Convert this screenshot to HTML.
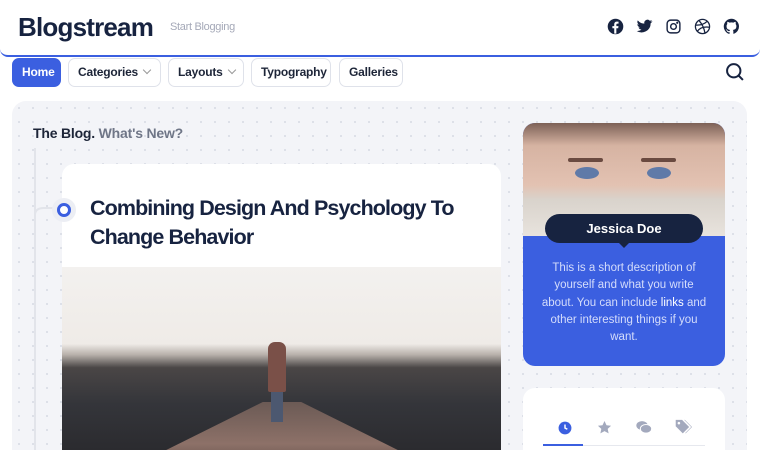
<!DOCTYPE html>
<html><head><meta charset="utf-8"><style>
*{box-sizing:border-box;margin:0;padding:0}
html,body{width:760px;height:450px;overflow:hidden}
body{background:#fff;font-family:"Liberation Sans",sans-serif;position:relative}
.hdr{position:absolute;left:0;top:0;width:760px;height:57px;border-bottom:2px solid #3b5fe0;border-radius:0 0 8px 8px;background:#fff}
.logo{position:absolute;left:18px;top:12px;font-size:26px;font-weight:bold;color:#172340;letter-spacing:-0.8px}
.tag{position:absolute;left:170px;top:21px;font-size:11px;color:#a5a9b8;letter-spacing:-0.3px}
.soc{position:absolute;top:18px}
.nav a{position:absolute;top:58px;height:29px;border:1px solid #dfe2ea;border-radius:7px;background:#fff;font-size:12px;font-weight:bold;color:#1d2538;line-height:27px;padding:0 9px;text-decoration:none;white-space:nowrap;letter-spacing:-0.2px}
.nav a.on{background:#3b5fe0;color:#fff;border-color:#3b5fe0}
.car{display:inline-block;width:6px;height:6px;border-right:1.3px solid #999;border-bottom:1.3px solid #999;transform:rotate(45deg);margin-left:6px;position:relative;top:-3px}
.main{position:absolute;left:12px;top:101px;width:735px;height:349px;border-radius:14px 14px 0 0;background-color:#f3f4f8;background-image:radial-gradient(circle,#d6d9e2 0.8px,transparent 1px);background-size:14px 14px}
.bt{position:absolute;left:33px;top:125px;font-size:14px;font-weight:bold;color:#1d2538;letter-spacing:-0.2px}
.bt span{color:#6f7687}
.vline{position:absolute;left:34px;top:148px;width:2px;height:302px;background:#e2e4ea}
.post{position:absolute;left:62px;top:164px;width:439px;height:286px;background:#fff;border-radius:12px 12px 0 0;overflow:hidden}
.title{position:absolute;left:28px;top:30px;font-size:21.5px;font-weight:bold;color:#172340;line-height:29px;letter-spacing:-0.9px}
.img1{position:absolute;left:0;top:103px;width:439px;height:183px;overflow:hidden;background:linear-gradient(#f3f1ef 0%,#efebe7 42%,#b7b0aa 48%,#4a4646 55%,#34353a 75%,#2b2b2f 100%)}
.dot{position:absolute;left:52px;top:198px;width:24px;height:24px;border-radius:50%;background:#eceef4}
.dot i{position:absolute;left:5px;top:5px;width:14px;height:14px;border-radius:50%;border:3px solid #3b5fe0;background:#fff}
.prof{position:absolute;left:523px;top:123px;width:202px;height:243px;border-radius:12px;overflow:hidden;background:#3b5fe0}
.face{position:absolute;left:0;top:0;width:202px;height:113px;background:linear-gradient(#7d6157 0%,#d6b3a2 20%,#e3c2b2 55%,#d9d3cc 68%,#e8e3dd 100%)}
.name{position:absolute;left:22px;top:91px;width:158px;height:29px;border-radius:15px;background:#172340;color:#fff;font-weight:bold;font-size:13px;text-align:center;line-height:29px}
.name:after{content:"";position:absolute;left:73px;top:28px;border:6px solid transparent;border-top-color:#172340}
.desc{position:absolute;left:0;top:137px;width:202px;text-align:center;font-size:11.5px;line-height:17.3px;color:#d5ddfb;white-space:nowrap}
.desc b{color:#fff;font-weight:normal}
.tabs{position:absolute;left:523px;top:388px;width:202px;height:62px;border-radius:12px 12px 0 0;background:#fff;overflow:hidden}
</style></head><body>
<div class="hdr">
<div class="logo">Blogstream</div><div class="tag">Start Blogging</div>
<svg class="soc" style="left:607px" width="17" height="17" viewBox="0 0 24 24"><circle cx="12" cy="12" r="11" fill="#172340"/><path d="M13.2 22v-7.5h2.6l.4-3h-3v-2c0-.9.3-1.5 1.6-1.5h1.5V5.3c-.3 0-1.2-.1-2.3-.1-2.3 0-3.8 1.4-3.8 3.9v2.3H7.6v3h2.6V22z" fill="#fff"/></svg>
<svg class="soc" style="left:636px" width="17" height="17" viewBox="0 0 24 24"><path fill="#172340" d="M23 4.6c-.8.4-1.7.6-2.6.7.9-.6 1.6-1.4 2-2.5-.9.5-1.9.9-2.9 1.1A4.5 4.5 0 0 0 11.8 8 12.8 12.8 0 0 1 2.5 3.3a4.5 4.5 0 0 0 1.4 6c-.7 0-1.4-.2-2-.6 0 2.2 1.6 4 3.6 4.5-.7.2-1.4.2-2 .1.6 1.8 2.3 3.1 4.2 3.1A9 9 0 0 1 1 18.3 12.8 12.8 0 0 0 20.7 7.4c.9-.6 1.6-1.4 2.3-2.3z"/></svg>
<svg class="soc" style="left:665px" width="17" height="17" viewBox="0 0 24 24" fill="none" stroke="#172340" stroke-width="2"><rect x="3" y="3" width="18" height="18" rx="5"/><circle cx="12" cy="12" r="4"/><circle cx="17.3" cy="6.7" r=".6" fill="#172340"/></svg>
<svg class="soc" style="left:694px" width="17" height="17" viewBox="0 0 24 24" fill="none" stroke="#172340" stroke-width="1.8"><circle cx="12" cy="12" r="10"/><path d="M7 3.5c4 4.5 7 10 8.5 17.5M2.2 10c6 .5 12-1 16.5-5.5M4.5 19C8 14 14 12 21.8 13"/></svg>
<svg class="soc" style="left:723px" width="17" height="17" viewBox="0 0 24 24"><path fill="#172340" d="M12 1a11 11 0 0 0-3.5 21.4c.6.1.8-.2.8-.5v-2c-3.1.7-3.7-1.3-3.7-1.3-.5-1.3-1.2-1.6-1.2-1.6-1-.7.1-.7.1-.7 1.1.1 1.7 1.1 1.7 1.1 1 1.7 2.6 1.2 3.2.9.1-.7.4-1.2.7-1.5-2.5-.3-5.1-1.2-5.1-5.4 0-1.2.4-2.2 1.1-3-.1-.3-.5-1.4.1-2.9 0 0 .9-.3 3 1.1a10.5 10.5 0 0 1 5.5 0c2.1-1.4 3-1.1 3-1.1.6 1.5.2 2.6.1 2.9.7.8 1.1 1.8 1.1 3 0 4.2-2.6 5.1-5.1 5.4.4.3.8 1 .8 2v3c0 .3.2.6.8.5A11 11 0 0 0 12 1z"/></svg>
</div>
<div class="nav">
<a class="on" style="left:12px;width:49px">Home</a>
<a style="left:68px;width:93px">Categories<span class="car"></span></a>
<a style="left:168px;width:76px">Layouts<span class="car"></span></a>
<a style="left:251px;width:80px">Typography</a>
<a style="left:339px;width:64px">Galleries</a>
</div>
<svg style="position:absolute;left:725px;top:62px" width="20" height="20" viewBox="0 0 24 24" fill="none" stroke="#172340" stroke-width="2.4"><circle cx="10.5" cy="10.5" r="8"/><path d="M16.5 16.5l5 5"/></svg>
<div class="main"></div>
<div class="bt">The Blog. <span>What's New?</span></div>
<div class="vline"></div>
<svg style="position:absolute;left:34px;top:205px" width="22" height="14"><path d="M1 14V10Q1 3 10 3h12" fill="none" stroke="#e2e4ea" stroke-width="2"/></svg>
<div class="post">
<div class="title">Combining Design And Psychology To<br>Change Behavior</div>
<div class="img1">
<div style="position:absolute;left:60px;top:135px;width:320px;height:70px;background:linear-gradient(#6b5a55,#8d7168 60%,#5a4a45);clip-path:polygon(44% 0,56% 0,100% 100%,0 100%)"></div>
<div style="position:absolute;left:206px;top:75px;width:18px;height:50px;background:#7a5048;border-radius:7px 7px 2px 2px"></div>
<div style="position:absolute;left:209px;top:125px;width:12px;height:30px;background:#4c5870"></div>
</div>
</div>
<div class="dot"><i></i></div>
<div class="prof">
<div class="face">
<div style="position:absolute;left:52px;top:44px;width:24px;height:12px;border-radius:50%;background:#5f7aa8"></div>
<div style="position:absolute;left:124px;top:44px;width:24px;height:12px;border-radius:50%;background:#5f7aa8"></div>
<div style="position:absolute;left:45px;top:35px;width:35px;height:4px;background:#6a4a40;border-radius:2px"></div>
<div style="position:absolute;left:118px;top:35px;width:35px;height:4px;background:#6a4a40;border-radius:2px"></div>
</div>
<div class="name">Jessica Doe</div>
<div class="desc">This is a short description of<br>yourself and what you write<br>about. You can include <b>links</b> and<br>other interesting things if you<br>want.</div>
</div>
<div class="tabs">
<svg style="position:absolute;left:35px;top:33px" width="14" height="14" viewBox="0 0 24 24"><circle cx="12" cy="12" r="11" fill="#3b5fe0"/><path d="M12 6v6l4 2" stroke="#fff" stroke-width="2.5" fill="none"/></svg>
<svg style="position:absolute;left:74px;top:32px" width="15" height="15" viewBox="0 0 24 24"><path fill="#a3a9bd" d="M12 1.5l3.2 6.8 7.3.8-5.4 5 1.5 7.3L12 17.7l-6.6 3.7 1.5-7.3-5.4-5 7.3-.8z"/></svg>
<svg style="position:absolute;left:113px;top:32px" width="16" height="15" viewBox="0 0 24 22"><ellipse cx="9" cy="8" rx="8.5" ry="6.5" fill="#a3a9bd"/><ellipse cx="15" cy="13" rx="8.5" ry="6.5" fill="#a3a9bd" stroke="#fff" stroke-width="1.5"/></svg>
<svg style="position:absolute;left:152px;top:31px" width="17" height="16" viewBox="0 0 24 22"><path fill="#a3a9bd" d="M1 1h9l10 10-9 9L1 10z"/><path d="M13 1h1l10 10-9 9-.5-.5 8.5-8.5z" fill="#a3a9bd"/><circle cx="5.5" cy="5.5" r="1.8" fill="#fff"/></svg>
<div style="position:absolute;left:20px;top:57px;width:162px;height:1px;background:#e6e8ee"></div>
<div style="position:absolute;left:20px;top:56px;width:40px;height:2px;background:#3b5fe0"></div>
</div>
</body></html>
